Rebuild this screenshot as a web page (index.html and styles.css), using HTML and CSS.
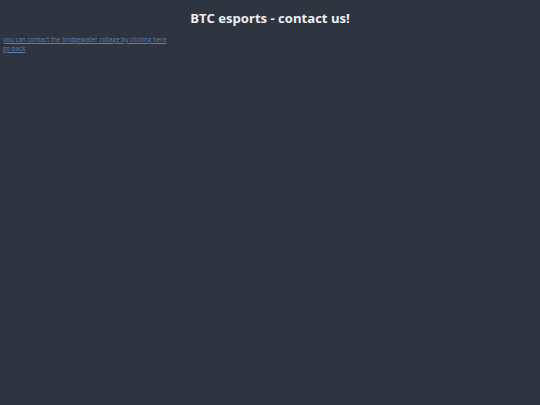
FILE: index.html
```html
<!DOCTYPE html>
<html>
<head>
<meta charset="utf-8">
<link rel="stylesheet" href="styles.css">
</head>
<body>
<h1 class="title">BTC esports - contact us!</h1>
<div class="links">
<a href="#">you can contact the bridgewater collage by clicking here</a><br>
<a href="#">go back</a>
</div>
</body>
</html>
```
FILE: styles.css
```css
html, body {
  margin: 0;
  padding: 0;
  background: #2e3440;
  height: 100%;
}
body {
  font-family: "Open Sans", "DejaVu Sans", sans-serif;
}
.title {
  margin: 0;
  padding-top: 9px;
  text-align: center;
  color: #eceff4;
  font-size: 13.1px;
  font-weight: 700;
  line-height: 18px;
}
.links {
  padding: 9px 0 0 3px;
  font-size: 6.3px;
  line-height: 8.5px;
}
.links a {
  color: #5e81ac;
}
```
